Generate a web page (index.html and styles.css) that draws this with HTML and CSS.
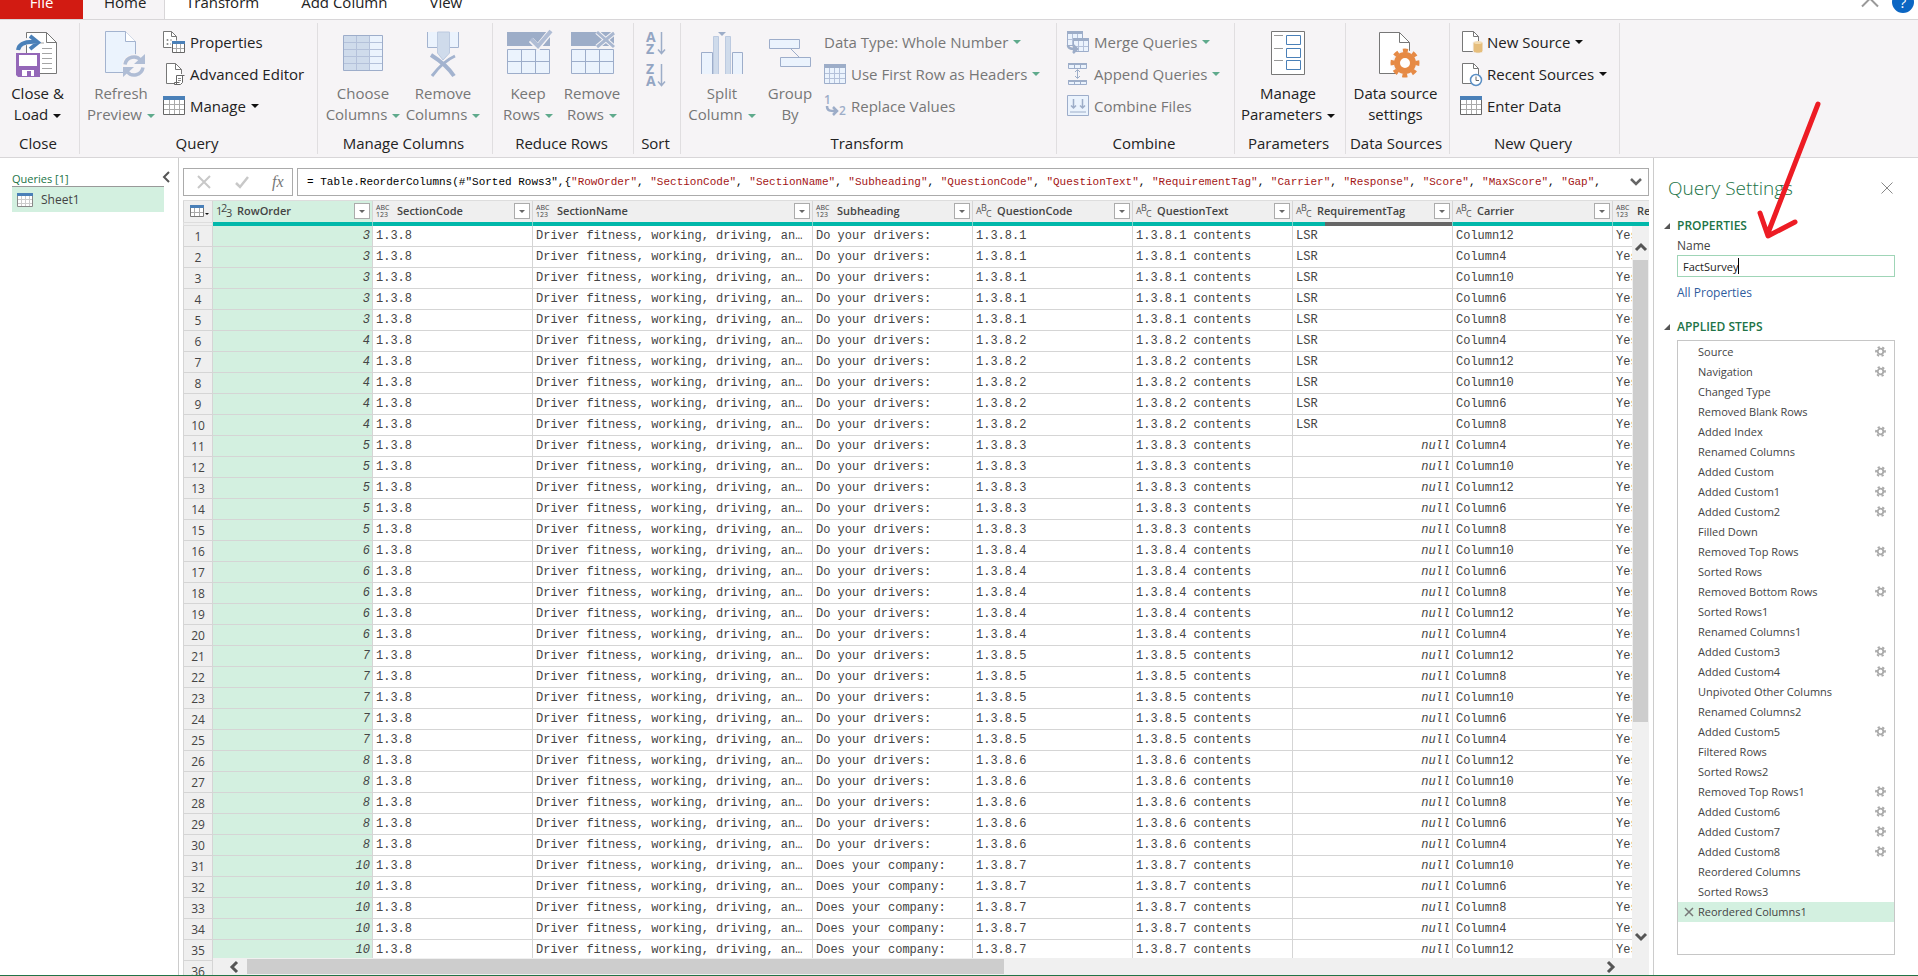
FILE: index.html
```html
<!DOCTYPE html>
<html lang="en">
<head>
<meta charset="utf-8">
<title>Power Query Editor</title>
<link rel="stylesheet" href="styles.css">
</head>
<body>
<div class="app">
  <header class="tabs">
    <button class="tab tab-file" type="button">File</button>
    <button class="tab tab-active" type="button">Home</button>
    <button class="tab" type="button">Transform</button>
    <button class="tab" type="button">Add Column</button>
    <button class="tab" type="button">View</button>
    <div class="tabs-end">
      <button class="icon-btn" type="button" aria-label="Collapse ribbon"><svg width="18" height="20" viewBox="0 0 18 20"><path d="M1 13.500L9 5.500l8 8" fill="none" stroke="#999" stroke-width="2"/></svg></button>
      <button class="icon-btn help" type="button" aria-label="Help">?</button>
    </div>
  </header>

  <div class="ribbon">
    <section class="group g-close">
      <div class="group-body">
        <button class="big" type="button">
          <svg width="48" height="50" viewBox="0 0 48 50"><path d="M12.500 3.500h20l10 10v31h-30z" fill="#fff" stroke="#777"/><path d="M32.500 3.500v10h10" fill="none" stroke="#777"/><path d="M20 14h10M28 19.500h10M28 24.500h10M28 29.500h10M28 34.500h10M28 39.500h10" stroke="#a5a5a5"/><path d="M3 20C6 12 13 11 22 14" fill="none" stroke="#f6f4f6" stroke-width="7"/><path d="M4 21c1-7 8-9 20-8M16 7l8 6.500-8 6.500" fill="none" stroke="#4a80b8" stroke-width="4"/><path d="M2 24h24v24H4l-2-2z" fill="#9467b8"/><path d="M5 26h18v11H5z" fill="#fff"/><path d="M8 41h12v6H8z" fill="#fff"/><path d="M13 42h4v6h-4z" fill="#9467b8"/></svg>
          <span>Close &amp;</span><span>Load<i class="caret"></i></span>
        </button>
      </div>
      <h2>Close</h2>
    </section>

    <section class="group g-query">
      <div class="group-body">
        <button class="big w76 off" type="button">
          <svg width="44" height="50" viewBox="0 0 44 50"><path d="M6.500 2.500h20l10 10v31h-30z" fill="#ebf3fd" stroke="#a3b3cf"/><path d="M26.500 2.500v10h10" fill="#fff" stroke="#a3b3cf"/><circle cx="35" cy="37" r="12" fill="#f6f4f6"/><path d="M26 35.500a9 9 0 0 1 16-4M44 38.500a9 9 0 0 1-16 4" fill="none" stroke="#b0bdd5" stroke-width="3.500"/><path d="M46 25v10H35zM24 48V38h11z" fill="#b0bdd5"/></svg>
          <span>Refresh</span><span>Preview<i class="caret"></i></span>
        </button>
        <div class="small-list">
          <button class="small" type="button"><svg width="22" height="22" viewBox="0 0 22 22"><path d="M8.500 16.500h-8v-16h8l5 5v4" fill="#fff" stroke="#777"/><path d="M8.500.5v5h5" fill="none" stroke="#777"/><circle cx="4.500" cy="9" r="1" fill="#888"/><circle cx="4.500" cy="13" r="1" fill="#888"/><path d="M7 9h2M7 13h1" stroke="#999"/><path d="M9.500 10.500h12v11h-12z" fill="#fff" stroke="#666"/><path d="M9 10h13v3H9z" fill="#4a80b8"/><path d="M13.500 13v8M17.500 13v8M10 17.500h11" stroke="#aaa"/></svg>Properties</button>
          <button class="small" type="button"><svg width="22" height="22" viewBox="0 0 22 22"><path d="M12 20.500H3.500v-20h9l6 6V11" fill="#fff" stroke="#777"/><path d="M12.500.5v6h6" fill="none" stroke="#777"/><path d="M13.500 21.500v-9h8M19.500 13v6.500l-2 2h-6v-2h5" fill="#fff" stroke="#666"/><path d="M15 15.500h3M15 17.500h3" stroke="#888"/></svg>Advanced Editor</button>
          <button class="small" type="button"><svg width="22" height="22" viewBox="0 0 22 22"><path d="M.5 2.500h21v17H.5z" fill="#fff" stroke="#666"/><path d="M0 1h22v4H0z" fill="#4a80b8"/><path d="M6.500 5v14M11.500 5v14M16.500 5v14M1 9.500h20M1 14.500h20" stroke="#aaa"/></svg>Manage<i class="caret"></i></button>
        </div>
      </div>
      <h2>Query</h2>
    </section>

    <section class="group g-columns">
      <div class="group-body">
        <button class="big w80 off" type="button">
          <svg width="44" height="50" viewBox="0 0 44 50"><path d="M2.500 6.500h39v35h-39z" fill="#ebf3fd"/><path d="M3 7h26v34H3z" fill="#cfdbeb"/><path d="M15.500 7v34M28.500 7v34M3 13.500h38M3 20.500h38M3 27.500h38M3 34.500h38" stroke="#b4c1da"/><path d="M2.500 6.500h39v35h-39z" fill="none" stroke="#9dadca"/></svg>
          <span>Choose</span><span>Columns<i class="caret"></i></span>
        </button>
        <button class="big w80 off" type="button">
          <svg width="44" height="50" viewBox="0 0 44 50"><path d="M6.500 3v15.500h10V3M27.500 3v15.500h10V3" fill="#ebf3fd" stroke="#a3b3cf"/><path d="M16.500 3v21l5.500 7 6.500-7V3z" fill="#cfdbeb" stroke="#bccae0"/><path d="M10 26c8 5 17 12 23 21" fill="none" stroke="#a3b3cf" stroke-width="4"/><path d="M34 27c-9 4-17 12-23 20" fill="none" stroke="#a3b3cf" stroke-width="3"/></svg>
          <span>Remove</span><span>Columns<i class="caret"></i></span>
        </button>
      </div>
      <h2>Manage Columns</h2>
    </section>

    <section class="group g-rows">
      <div class="group-body">
        <button class="big w64 off" type="button">
          <svg width="46" height="50" viewBox="0 0 46 50"><path d="M2 3h43v14H2z" fill="#9dadc8"/><path d="M2.500 20.500h42v24h-42z" fill="#ebf3fd" stroke="#9dadca"/><path d="M16.500 20v24M30.500 20v24M2 32.500h42" stroke="#9dadca"/><path d="M26 11l7 7L46 2" fill="none" stroke="#f6f4f6" stroke-width="6"/><path d="M26 10l7 7L46 2" fill="none" stroke="#b0bdd5" stroke-width="4"/></svg>
          <span>Keep</span><span>Rows<i class="caret"></i></span>
        </button>
        <button class="big w64 off" type="button">
          <svg width="46" height="50" viewBox="0 0 46 50"><path d="M2 3h43v14H2z" fill="#9dadc8"/><path d="M2.500 20.500h42v24h-42z" fill="#ebf3fd" stroke="#9dadca"/><path d="M16.500 20v24M30.500 20v24M2 32.500h42" stroke="#9dadca"/><path d="M28 3l17 15M45 4L28 18" fill="none" stroke="#f6f4f6" stroke-width="5"/><path d="M28 3l17 15M45 4L28 18" fill="none" stroke="#a9b7d0" stroke-width="3"/></svg>
          <span>Remove</span><span>Rows<i class="caret"></i></span>
        </button>
      </div>
      <h2>Reduce Rows</h2>
    </section>

    <section class="group g-sort">
      <div class="group-body sort-body">
        <button class="sort" type="button" aria-label="Sort ascending"><svg width="20" height="26" viewBox="0 0 20 26"><text x="0" y="12" class="az">A</text><text x="0" y="24" class="az">Z</text><path d="M15.500 2v21M12 19.500l3.500 4 3.500-4" fill="none" stroke="#9dadc8" stroke-width="1.500"/></svg></button>
        <button class="sort" type="button" aria-label="Sort descending"><svg width="20" height="26" viewBox="0 0 20 26"><text x="0" y="12" class="az">Z</text><text x="0" y="24" class="az">A</text><path d="M15.500 2v21M12 19.500l3.500 4 3.500-4" fill="none" stroke="#9dadc8" stroke-width="1.500"/></svg></button>
      </div>
      <h2>Sort</h2>
    </section>

    <section class="group g-transform">
      <div class="group-body">
        <button class="big w76 off" type="button">
          <svg width="44" height="50" viewBox="0 0 44 50"><path d="M1.500 45V23.500h11V45M32.500 45V23.500h10V45" fill="#ebf3fd" stroke="#9dadca"/><path d="M13.500 45V7.500h5V45M25.500 45V7.500h5V45" fill="#cfdbeb" stroke="#bccae0"/><path d="M18 3h8l-4 4z" fill="#9dadc8"/></svg>
          <span>Split</span><span>Column<i class="caret"></i></span>
        </button>
        <button class="big w60 off" type="button">
          <svg width="44" height="50" viewBox="0 0 44 50"><path d="M23 20l8 8" stroke="#9dadca"/><path d="M1.500 10.500h30v9h-30zM12.500 28.500h30v9h-30z" fill="#ebf3fd" stroke="#9dadca"/></svg>
          <span>Group</span><span>By</span>
        </button>
        <div class="small-list">
          <button class="small off" type="button">Data Type: Whole Number<i class="caret"></i></button>
          <button class="small off" type="button"><svg width="22" height="22" viewBox="0 0 22 22"><path d="M.5 1.500h21v19H.5z" fill="#ebf3fd" stroke="#9dadca"/><path d="M0 1h22v4H0z" fill="#9dadc8"/><path d="M5.500 5v15M10.500 5v15M15.500 5v15M1 10.500h20M1 15.500h20" stroke="#b4c1da"/></svg>Use First Row as Headers<i class="caret"></i></button>
          <button class="small off" type="button"><svg width="22" height="22" viewBox="0 0 22 22"><text x="0" y="9" class="digit">1</text><text x="15" y="20" class="digit">2</text><path d="M3 11c0 5 3 5 9 5M9 12l4 4-4 4" fill="none" stroke="#9dadc8" stroke-width="2.500"/></svg>Replace Values</button>
        </div>
      </div>
      <h2>Transform</h2>
    </section>

    <section class="group g-combine">
      <div class="group-body">
        <div class="small-list">
          <button class="small off" type="button"><svg width="22" height="24" viewBox="0 0 22 24"><path d="M.5 1.500h15v14H.5z" fill="#ebf3fd" stroke="#9dadca"/><path d="M0 1h16v3H0z" fill="#9dadc8"/><path d="M5.500 4v11M10.500 4v11M1 9.500h14" stroke="#b4c1da"/><path d="M6.500 8.500h15v13h-15z" fill="#ebf3fd" stroke="#9dadca"/><path d="M6 8h16v3H6z" fill="#9dadc8"/><path d="M11.500 11v10M16.500 11v10M7 16.500h14" stroke="#b4c1da"/><path d="M1 15c0 4 4 4 9 4M6 15l4 4-4 4" fill="none" stroke="#9dadc8" stroke-width="2.500"/></svg>Merge Queries<i class="caret"></i></button>
          <button class="small off" type="button"><svg width="22" height="24" viewBox="0 0 22 24"><path d="M1.500 1.500h18v5h-18zM1.500 18.500h18v4h-18z" fill="#ebf3fd" stroke="#9dadca"/><path d="M1 1h19v2H1zM1 18h19v2H1z" fill="#9dadc8"/><path d="M7.500 3v3M13.500 3v3M7.500 20v2M13.500 20v2" stroke="#9dadca"/><path d="M10.500 8v8M8 10l2.500-2.500L13 10M8 14l2.500 2.500L13 14" fill="none" stroke="#9dadc8"/></svg>Append Queries<i class="caret"></i></button>
          <button class="small off" type="button"><svg width="22" height="24" viewBox="0 0 22 24"><path d="M.5 1.500h21v20H.5z" fill="#ebf3fd" stroke="#9dadca"/><path d="M3 18h16" stroke="#9dadc8"/><path d="M6.500 5v9M4 11.500l2.500 2.500L9 11.500M15.500 5v9M13 11.500l2.500 2.500 2.500-2.500" fill="none" stroke="#9dadc8" stroke-width="1.500"/></svg>Combine Files</button>
        </div>
      </div>
      <h2>Combine</h2>
    </section>

    <section class="group g-params">
      <div class="group-body">
        <button class="big" type="button">
          <svg width="44" height="50" viewBox="0 0 44 50"><path d="M5.500 2.500h33v43h-33z" fill="#fff" stroke="#777"/><path d="M8 6.500h9M8 19.500h9M8 31.500h9" stroke="#999"/><path d="M20.500 6.500h14v9h-14zM20.500 19.500h14v9h-14zM20.500 31.500h14v9h-14z" fill="#fff" stroke="#4a80b8"/></svg>
          <span>Manage</span><span>Parameters<i class="caret"></i></span>
        </button>
      </div>
      <h2>Parameters</h2>
    </section>

    <section class="group g-sources">
      <div class="group-body">
        <button class="big" type="button">
          <svg width="44" height="50" viewBox="0 0 44 50"><path d="M5.500 3.500h20l10 10v31h-30z" fill="#fff" stroke="#777"/><path d="M25.500 3.500v10h10" fill="none" stroke="#777"/><circle cx="31" cy="34" r="13" fill="#f6f4f6"/><circle cx="31" cy="34" r="8" fill="#fff" stroke="#e68a45" stroke-width="6"/><circle cx="31" cy="34" r="12.500" fill="none" stroke="#e68a45" stroke-width="4" stroke-dasharray="4.900 4.917" transform="rotate(-11 31 34)"/></svg>
          <span>Data source</span><span>settings</span>
        </button>
      </div>
      <h2>Data Sources</h2>
    </section>

    <section class="group g-new">
      <div class="group-body">
        <div class="small-list">
          <button class="small" type="button"><svg width="22" height="24" viewBox="0 0 22 24"><path d="M2.500 1.500h11l5 5v15h-16z" fill="#fff" stroke="#777"/><path d="M13.500 1.500v5h5" fill="none" stroke="#777"/><path d="M13 12v9c0 3 10 3 10 0v-9z" fill="#e6be7c" stroke="#f6f4f6"/><ellipse cx="18" cy="12.500" rx="4" ry="1.500" fill="#f3dcb2"/></svg>New Source<i class="caret"></i></button>
          <button class="small" type="button"><svg width="22" height="24" viewBox="0 0 22 24"><path d="M2.500 1.500h11l5 5v15h-16z" fill="#fff" stroke="#777"/><path d="M13.500 1.500v5h5" fill="none" stroke="#777"/><circle cx="16" cy="18" r="5.500" fill="#fff" stroke="#5b8fc4" stroke-width="1.500"/><path d="M16 14.500V18.500h3" fill="none" stroke="#666"/></svg>Recent Sources<i class="caret"></i></button>
          <button class="small" type="button"><svg width="22" height="22" viewBox="0 0 22 22"><path d="M.5 2.500h21v17H.5z" fill="#fff" stroke="#666"/><path d="M0 1h22v4H0z" fill="#4a80b8"/><path d="M6.500 5v14M11.500 5v14M16.500 5v14M1 9.500h20M1 14.500h20" stroke="#aaa"/></svg>Enter Data</button>
        </div>
      </div>
      <h2>New Query</h2>
    </section>
  </div>

  <main class="workspace">
    <nav class="queries">
      <div class="queries-head"><h3>Queries [1]</h3><button class="icon-btn" type="button" aria-label="Collapse queries"><svg width="8" height="12" viewBox="0 0 8 12"><path d="M7 1L2 6l5 5" fill="none" stroke="#555" stroke-width="2"/></svg></button></div>
      <button class="query" type="button"><svg width="16" height="14" viewBox="0 0 16 14"><path d="M.5.5h15v13H.5z" fill="#fff" stroke="#888"/><path d="M0 0h16v3H0z" fill="#4a80b8"/><path d="M4.500 3v10M8.500 3v10M12.500 3v10M1 6.500h14M1 10.500h14" stroke="#ccc"/></svg>Sheet1</button>
    </nav>

    <section class="editor">
      <div class="formula-row">
        <div class="formula-tools">
          <button class="icon-btn" type="button" aria-label="Cancel"><svg width="16" height="14" viewBox="0 0 16 14"><path d="M2 1l12 12M14 1L2 13" fill="none" stroke="#c8c8c8" stroke-width="2"/></svg></button>
          <button class="icon-btn" type="button" aria-label="Commit"><svg width="16" height="14" viewBox="0 0 16 14"><path d="M2 8l4 4L14 2" fill="none" stroke="#c8c8c8" stroke-width="2.500"/></svg></button>
          <button class="icon-btn fx" type="button" aria-label="Insert step">fx</button>
        </div>
        <div class="formula">
          <code id="formula" role="textbox" aria-label="Formula"></code>
          <button class="icon-btn" type="button" aria-label="Expand formula bar"><svg width="12" height="8" viewBox="0 0 12 8"><path d="M1 1l5 5 5-5" fill="none" stroke="#666" stroke-width="2.500"/></svg></button>
        </div>
      </div>
      <div class="grid">
        <table>
          <colgroup><col class="c-num"><col class="c-std"><col class="c-std"><col class="c-wide"><col class="c-std"><col class="c-std"><col class="c-std"><col class="c-std"><col class="c-std"><col class="c-std"></colgroup>
          <thead><tr id="head"></tr></thead>
          <tbody id="rows"></tbody>
        </table>
        <div class="vscroll"><svg width="14" height="10" viewBox="0 0 14 10"><path d="M2 8l5-5 5 5" fill="none" stroke="#555" stroke-width="3"/></svg><div class="vthumb"></div><svg width="14" height="10" viewBox="0 0 14 10"><path d="M2 2l5 5 5-5" fill="none" stroke="#555" stroke-width="3"/></svg></div>
        <div class="hscroll"><svg width="10" height="12" viewBox="0 0 10 12"><path d="M8 1L3 6l5 5" fill="none" stroke="#555" stroke-width="3"/></svg><div class="htrack"><div class="hthumb"></div></div><svg width="10" height="12" viewBox="0 0 10 12"><path d="M2 1l5 5-5 5" fill="none" stroke="#555" stroke-width="3"/></svg></div>
      </div>
    </section>

    <aside class="settings">
      <div class="settings-head"><h1>Query Settings</h1><button class="icon-btn" type="button" aria-label="Close"><svg width="12" height="12" viewBox="0 0 12 12"><path d="M.5.5l11 11M11.500.5l-11 11" stroke="#888"/></svg></button></div>
      <h3 class="section-title">PROPERTIES</h3>
      <div class="props">
        <label for="qname">Name</label>
        <div class="name-field"><input id="qname" type="text" value="FactSurvey"><i class="text-cursor"></i></div>
        <a href="#">All Properties</a>
      </div>
      <h3 class="section-title section-steps">APPLIED STEPS</h3>
      <ul class="steps" id="steps"></ul>
    </aside>
  </main>
  <svg class="pointer" width="50" height="145" viewBox="0 0 50 145"><path d="M61 3L11 132M3 112l8 23 27-14" fill="none" stroke="#ed1c24" stroke-width="5" stroke-linecap="round" stroke-linejoin="round"/></svg>
</div>
<script src="app.js"></script>
</body>
</html>
```
FILE: styles.css
```css
* { box-sizing: border-box; }
body {
  margin: 0;
  background: #fff;
  color: #222;
  font: 15px/21px "Open Sans", "Noto Sans", sans-serif;
}
button {
  margin: 0;
  padding: 0;
  border: 0;
  background: none;
  color: inherit;
  font: inherit;
}
h1, h2, h3 { margin: 0; font-weight: 400; }
svg { display: block; flex: none; overflow: visible; }

.app {
  position: relative;
  display: flex;
  flex-direction: column;
  height: 100vh;
  overflow: hidden;
  border-bottom: 1px solid #217346;
}

/* Ribbon tabs */
.tabs {
  display: flex;
  align-items: flex-end;
  flex: none;
  height: 20px;
  overflow: hidden;
  border-bottom: 1px solid #d8d6d8;
}
.tab { height: 34px; padding: 0 21px; }
.tab-file { width: 83px; background: #d21b12; color: #fff; }
.tab-active { width: 82px; background: #f6f4f6; border-right: 1px solid #d8d6d8; }
.tabs-end {
  display: flex;
  align-items: flex-end;
  gap: 13px;
  height: 32px;
  margin-left: auto;
  padding: 0 4px 6px 0;
}
.help {
  width: 22px;
  height: 22px;
  border-radius: 50%;
  background: #0b66c3;
  color: #fff;
}

/* Ribbon groups */
.ribbon {
  display: flex;
  flex: none;
  padding: 3px 0;
  background: #f6f4f6;
  border-bottom: 1px solid #d8d6d8;
}
.group {
  display: flex;
  flex-direction: column;
  flex: none;
  border-right: 1px solid #e0dee0;
}
.group h2 {
  padding: 0 3px 1px 0;
  font-size: 15px;
  line-height: 20px;
  text-align: center;
  white-space: nowrap;
}
.group-body {
  display: flex;
  height: 110px;
  padding: 3px 3px 0;
}
.g-close { width: 80px; }
.g-query { width: 238px; }
.g-columns { width: 175px; }
.g-rows { width: 141px; }
.g-sort { width: 47px; }
.g-transform { width: 376px; }
.g-combine { width: 178px; }
.g-params { width: 111px; }
.g-sources { width: 104px; }
.g-new { width: 170px; }
.g-columns .group-body { padding-left: 5px; }
.g-combine .group-body, .g-new .group-body { padding-left: 6px; }
.g-close .group-body, .g-params .group-body, .g-sources .group-body { padding: 3px 5px 0 1px; }
.g-close .big, .g-params .big, .g-sources .big { flex: 1; }

.big {
  display: flex;
  flex-direction: column;
  align-items: center;
  flex: none;
  height: 104px;
  padding-top: 3px;
  white-space: nowrap;
}
.big svg { margin-bottom: 4px; }
.w60 { width: 60px; }
.w64 { width: 64px; }
.w76 { width: 76px; }
.w80 { width: 80px; }
.small-list { display: flex; flex-direction: column; padding-left: 4px; }
.small {
  display: flex;
  align-items: center;
  gap: 5px;
  height: 32px;
  white-space: nowrap;
}
.off { color: #777; }
.caret {
  display: inline-block;
  margin-left: 5px;
  border: 4px solid transparent;
  border-top-color: #111;
  border-bottom: 0;
  vertical-align: middle;
}
.small .caret { margin-left: 0; }
.off .caret { border-top-color: #5faa8c; }
.sort-body { flex-direction: column; align-items: center; gap: 6px; padding: 7px 4px 0 2px; }
.az { font: 700 14px "Open Sans", sans-serif; fill: #93a5c3; }
.digit { font: 600 12px "Open Sans", sans-serif; fill: #9dadc8; }

/* Workspace */
.workspace { display: flex; flex: 1; min-height: 0; font-size: 12px; line-height: 16px; color: #444; }
.queries { flex: none; width: 179px; padding: 13px 14px 0 12px; border-right: 1px solid #ccc; }
.queries-head { display: flex; align-items: flex-start; height: 16px; border-bottom: 1px solid #999; }
.queries-head h3 { flex: 1; font-size: 11px; color: #217346; }
.queries-head .icon-btn { margin-right: -6px; }
.query {
  display: flex;
  align-items: center;
  gap: 8px;
  width: 100%;
  height: 25px;
  padding-left: 5px;
  background: #d3f0e0;
}

.editor { display: flex; flex-direction: column; flex: 1; min-width: 0; padding: 10px 4px 0; }
.formula-row { display: flex; gap: 4px; flex: none; margin-bottom: 4px; }
.formula-tools, .formula { display: flex; align-items: center; height: 28px; border: 1px solid #ababab; }
.formula-tools { gap: 22px; width: 110px; padding-left: 12px; }
.fx { font: italic 16px/20px "Liberation Serif", serif; color: #777; }
.formula { flex: 1; min-width: 0; padding: 0 6px 0 9px; }
.formula code {
  flex: 1;
  overflow: hidden;
  font: 11px/18px "Liberation Mono", monospace;
  color: #000;
  white-space: pre;
}
.formula .str { color: #a31515; }

/* Data preview grid */
.grid { position: relative; flex: 1; min-height: 0; overflow: hidden; }
table { width: 1590px; border-collapse: separate; border-spacing: 0; table-layout: fixed; }
.c-num { width: 30px; }
.c-std { width: 160px; }
.c-wide { width: 280px; }
th {
  height: 26px;
  padding: 0;
  background: #efefef;
  border-top: 1px solid #ddd;
  font-weight: 600;
  text-align: left;
}
.th-main { display: flex; align-items: center; gap: 6px; height: 21px; padding: 0 2px 1px 3px; border-right: 1px solid #d5d5d5; }
.th-main b { flex: 1; overflow: hidden; font: 600 11px/16px "Open Sans", sans-serif; }
.th-corner { justify-content: flex-start; gap: 1px; padding-left: 6px; border-left: 1px solid #d5d5d5; }
.quality { display: flex; height: 4px; border-right: 1px solid #7fd8d0; background: #01b8aa; }
.quality.none { background: #efefef; border: 1px solid #ddd; }
.quality.partial { background: linear-gradient(to right, #01b8aa 20%, #666 20%); }
.filter {
  display: flex;
  align-items: center;
  justify-content: center;
  width: 16px;
  height: 16px;
  background: #fff;
  border: 1px solid #ababab;
}
.filter .caret { margin: 0; border-width: 3px 3px 0; border-top-color: #666; }
.th-corner .caret { margin: 6px 0 0; border-width: 2px 2px 0; }
.type-text { font: 9px "Open Sans", sans-serif; fill: #555; }
.type-num { font: 11px "Open Sans", sans-serif; fill: #444; }
.type-any { font: 7px "Open Sans", sans-serif; fill: #444; }
td, tbody th { height: 21px; border: 0; border-right: 1px solid #d5d5d5; border-bottom: 1px solid #d5d5d5; }
td {
  overflow: hidden;
  padding: 0 8px 0 3px;
  font: 12px/18px "Liberation Mono", monospace;
  text-overflow: ellipsis;
  white-space: nowrap;
}
tbody th { padding-top: 2px; border-left: 1px solid #d5d5d5; font: 12px/18px "Open Sans", sans-serif; text-align: center; }
.selected { background: #d3f0e0; }
td.num { padding-right: 2px; font-style: italic; text-align: right; }

.vscroll, .hscroll { position: absolute; display: flex; align-items: center; background: #f0f0f0; }
.vscroll { top: 26px; right: 0; bottom: 17px; width: 17px; flex-direction: column; padding: 16px 0 16px; }
.vthumb { width: 15px; height: 462px; margin: 8px 0 auto; background: #cdcdcd; }
.hscroll { left: 30px; right: 0; bottom: 0; height: 17px; padding: 0 33px 0 16px; }
.htrack { flex: 1; margin: 0 8px; }
.hthumb { width: 56%; height: 15px; background: #cdcdcd; }

/* Settings pane */
.settings { display: flex; flex-direction: column; flex: none; width: 265px; padding: 14px 23px 20px 14px; border-left: 1px solid #ccc; }
.settings-head { display: flex; align-items: center; justify-content: space-between; height: 32px; padding-right: 2px; }
.settings-head h1 { font-size: 19px; line-height: 28px; font-weight: 300; color: #217346; }
.section-title {
  display: flex;
  align-items: center;
  height: 20px;
  margin: 12px 0 2px;
  font-size: 12px;
  font-weight: 600;
  color: #217346;
}
.section-steps { margin: 16px 0 3px; }
.section-title::before {
  content: "";
  margin: 0 7px 0 -4px;
  border: 3px solid #555;
  border-top-color: transparent;
  border-left-color: transparent;
}
.props { display: flex; flex-direction: column; padding-left: 9px; }
.name-field { position: relative; margin: 1px 0 8px; }
.name-field input {
  width: 100%;
  height: 22px;
  padding: 0 5px;
  border: 1px solid #9fd5b7;
  outline: 0;
  background: #fff;
  color: #222;
  font: 11px/18px "Open Sans", sans-serif;
}
.text-cursor { position: absolute; left: 61px; top: 3px; width: 1px; height: 16px; background: #000; }
.props a { color: #2f5c9e; text-decoration: none; }
.steps {
  flex: 1;
  min-height: 0;
  margin: 0 0 0 9px;
  padding: 1px 0 0;
  border: 1px solid #c6c6c6;
  font-size: 11px;
  list-style: none;
}
.steps li { display: flex; align-items: center; height: 20px; padding: 0 8px 0 6px; }
.steps li span { flex: 1; }
.steps .lead { width: 14px; }

.pointer { position: absolute; top: 101px; right: 111px; pointer-events: none; }
```
FILE: app.js
```js
const formulaParts = '= Table.ReorderColumns(#"Sorted Rows3",{"RowOrder", "SectionCode", "SectionName", "Subheading", "QuestionCode", "QuestionText", "RequirementTag", "Carrier", "Response", "Score", "MaxScore", "Gap",';
document.getElementById("formula").innerHTML = formulaParts.replace(/([ {])("[A-Za-z]+")/g, '$1<span class="str">$2</span>');

const typeIcons = {
  num: '<svg width="15" height="16" viewBox="0 0 15 16"><text x="0" y="12" class="type-num">1</text><text x="5" y="9" class="type-num">2</text><text x="10" y="14" class="type-num">3</text></svg>',
  any: '<svg width="15" height="16" viewBox="0 0 15 16"><text x="0" y="7" class="type-any">ABC</text><text x="0" y="14" class="type-any">123</text></svg>',
  text: '<svg width="15" height="16" viewBox="0 0 15 16"><text x="0" y="11" class="type-text">A</text><text x="5" y="8" class="type-text">B</text><text x="10" y="14" class="type-text">C</text></svg>'
};
const columns = [
  ["RowOrder", "num"], ["SectionCode", "any"], ["SectionName", "any"], ["Subheading", "any"],
  ["QuestionCode", "text"], ["QuestionText", "text"], ["RequirementTag", "text"], ["Carrier", "text"], ["Response", "any"]
];
const tableIcon = '<svg width="14" height="12" viewBox="0 0 14 12"><path d="M.5.5h13v11H.5z" fill="#fff" stroke="#777"/><path d="M0 0h14v3H0z" fill="#4a80b8"/><path d="M4.500 3v8M9.500 3v8M1 7.500h12" stroke="#aaa"/></svg>';
document.getElementById("head").innerHTML =
  `<th><div class="th-main th-corner">${tableIcon}<i class="caret"></i></div><div class="quality none"></div></th>` +
  columns.map(([name, type], i) =>
    `<th class="${i ? "" : "selected"}"><div class="th-main">${typeIcons[type]}<b>${name}</b><button class="filter" type="button" aria-label="Filter ${name}"><i class="caret"></i></button></div><div class="quality${name === "RequirementTag" ? " partial" : ""}"></div></th>`
  ).join("");

const blocks = [
  [3, [12, 4, 10, 6, 8]], [4, [4, 12, 10, 6, 8]], [5, [4, 10, 12, 6, 8]], [6, [10, 6, 8, 12, 4]],
  [7, [12, 8, 10, 6, 4]], [8, [12, 10, 8, 6, 4]], [10, [10, 6, 8, 4, 12]], [11, [10]]
];
let n = 0;
document.getElementById("rows").innerHTML = blocks.map(([order, carriers], b) =>
  carriers.map(c => {
    const code = `1.3.8.${b + 1}`;
    return `<tr><th>${++n}</th><td class="num selected">${order}</td><td>1.3.8</td><td>Driver fitness, working, driving, and rest</td>` +
      `<td>${b < 6 ? "Do your drivers:" : "Does your company:"}</td><td>${code}</td><td>${code} contents</td>` +
      (b < 2 ? "<td>LSR</td>" : '<td class="num">null</td>') + `<td>Column${c}</td><td>Yes</td></tr>`;
  }).join("")).join("");

const gear = '<svg width="11" height="11" viewBox="0 0 11 11"><circle cx="5.500" cy="4.500" r="2.800" fill="none" stroke="#aaa" stroke-width="1.800"/><circle cx="5.500" cy="4.500" r="4.500" fill="none" stroke="#aaa" stroke-width="1.800" stroke-dasharray="2.300 2.412" transform="rotate(-15 5.500 4.500)"/></svg>';
const cross = '<svg width="10" height="10" viewBox="0 0 10 10"><path d="M1 1l8 8M9 1L1 9" stroke="#777" stroke-width="1.500"/></svg>';
const steps = ["Source*", "Navigation*", "Changed Type", "Removed Blank Rows", "Added Index*", "Renamed Columns",
  "Added Custom*", "Added Custom1*", "Added Custom2*", "Filled Down", "Removed Top Rows*", "Sorted Rows",
  "Removed Bottom Rows*", "Sorted Rows1", "Renamed Columns1", "Added Custom3*", "Added Custom4*",
  "Unpivoted Other Columns", "Renamed Columns2", "Added Custom5*", "Filtered Rows", "Sorted Rows2",
  "Removed Top Rows1*", "Added Custom6*", "Added Custom7*", "Added Custom8*", "Reordered Columns",
  "Sorted Rows3", "Reordered Columns1"];
document.getElementById("steps").innerHTML = steps.map((s, i) => {
  const last = i === steps.length - 1;
  return `<li class="${last ? "selected" : ""}"><div class="lead">${last ? cross : ""}</div><span>${s.replace("*", "")}</span>${s.endsWith("*") ? gear : ""}</li>`;
}).join("");
```
